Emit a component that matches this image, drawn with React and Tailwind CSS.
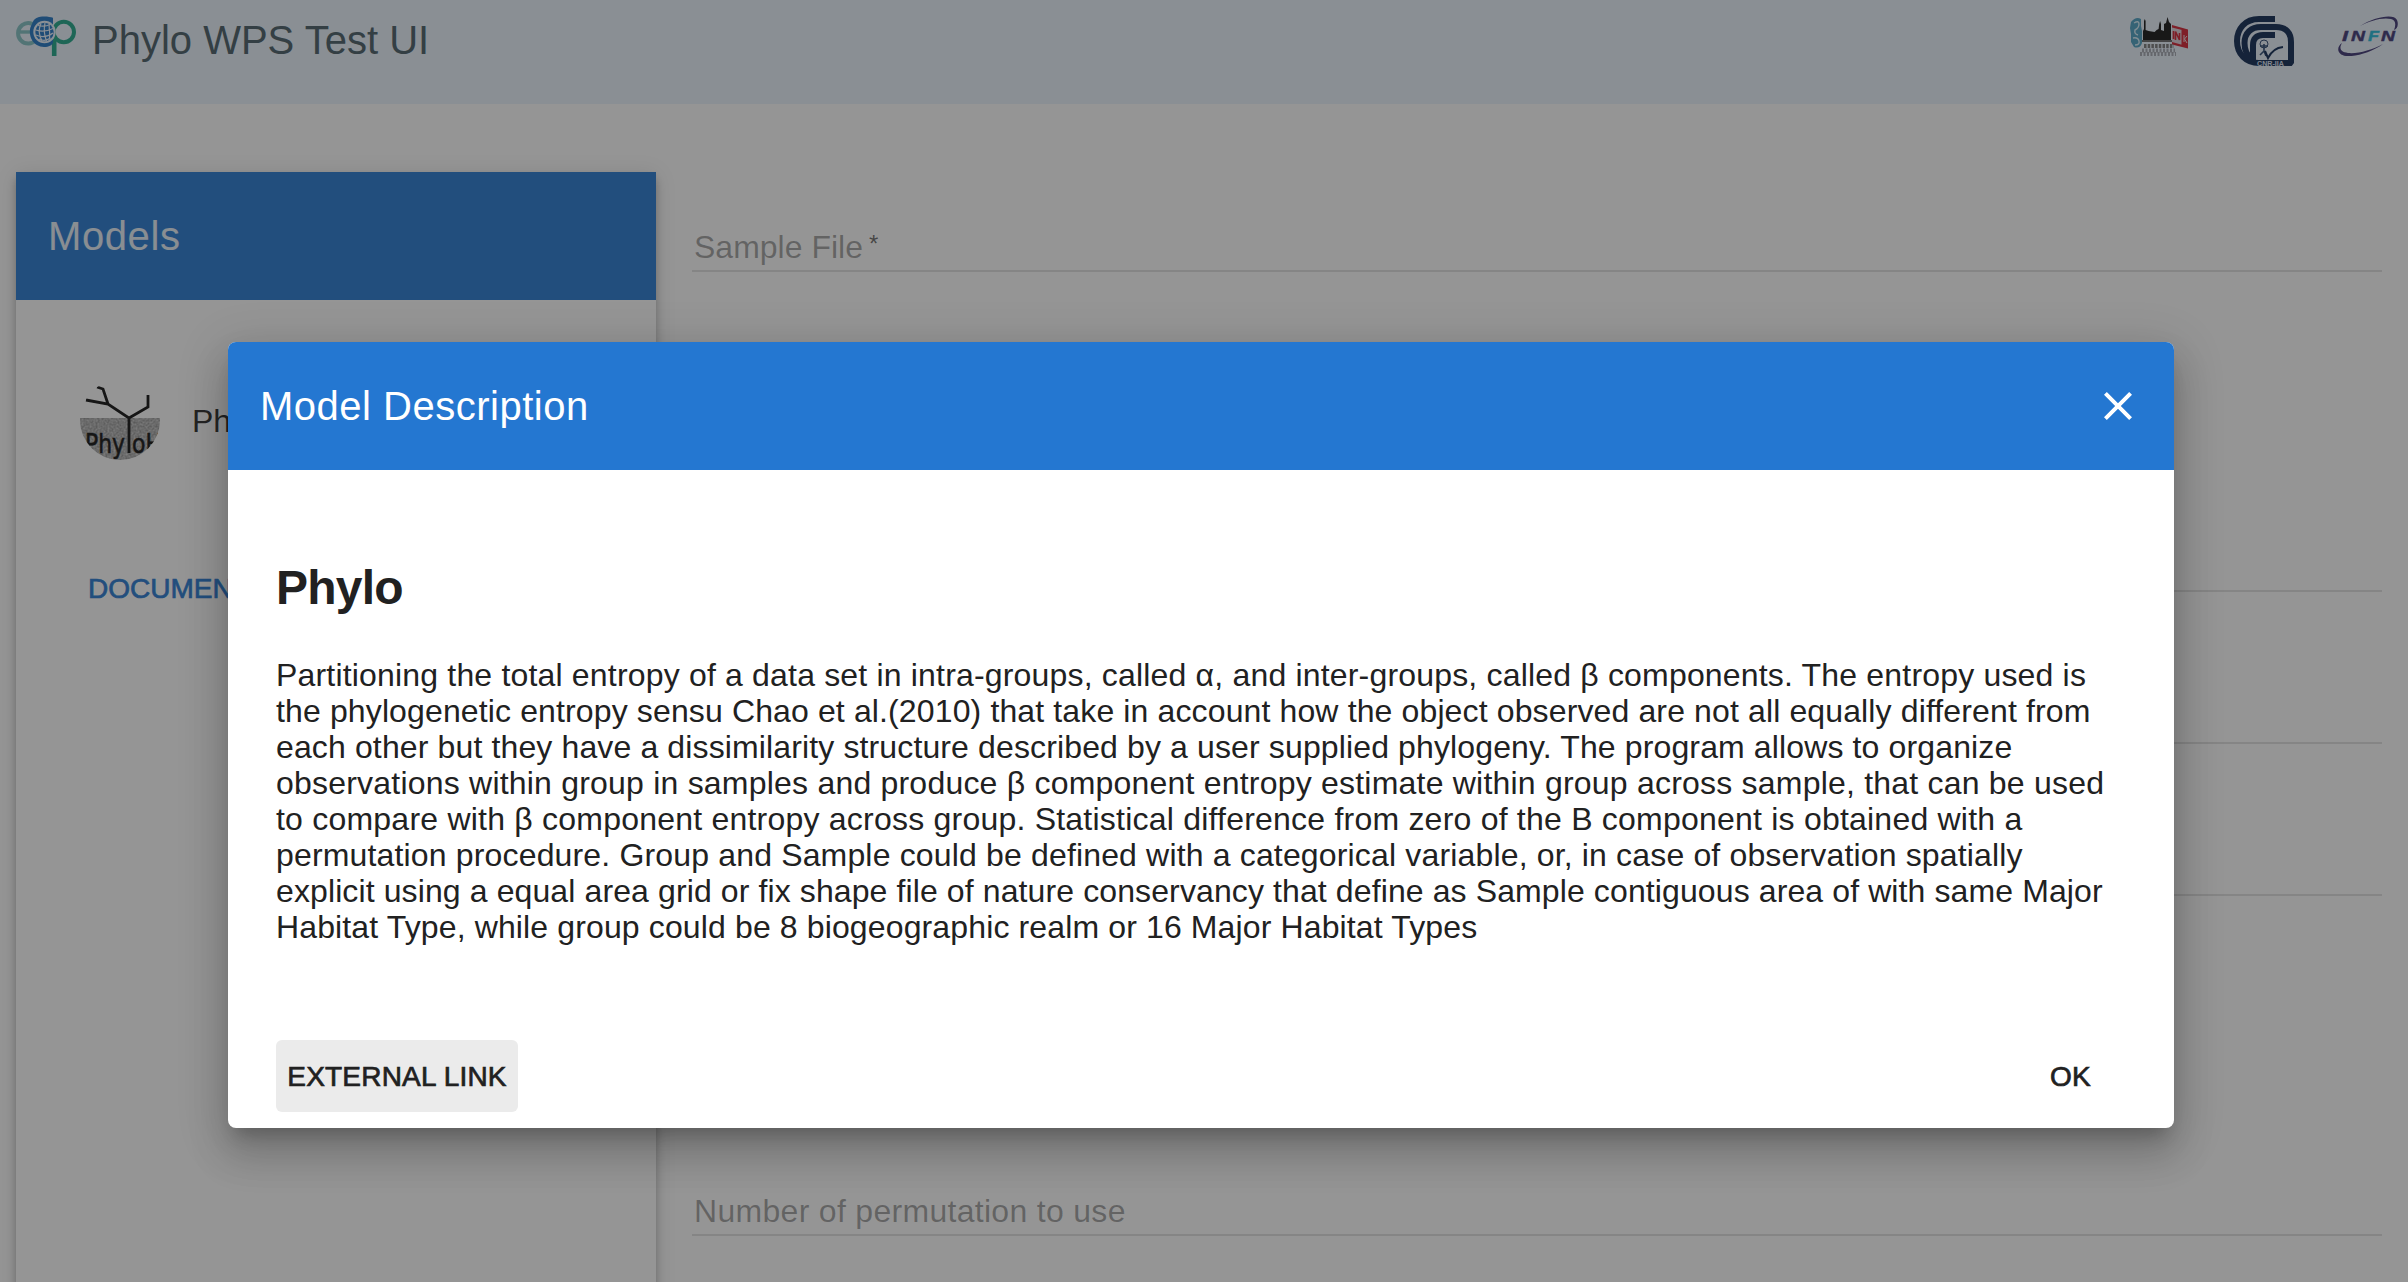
import { MdClose } from "react-icons/md";

function EgpLogo() {
  return (
    <svg width="60" height="40" viewBox="0 0 60 40" fill="none">
      <path d="M20 24a10.200 10.200 0 1 1 1-12" stroke="#7fc0c2" strokeWidth="4" />
      <path d="M4 16H15" stroke="#7fc0c2" strokeWidth="3.400" />
      <circle cx="47.800" cy="16" r="10.200" stroke="#1ba586" strokeWidth="4" />
      <path d="M38.200 20V40" stroke="#1ba586" strokeWidth="4.600" />
      <path d="M37 1.800C33 .2 25-.4 20.500 2C17 4 17 6 15.500 9C13 13 13.500 20 16 24C18 28 23 31 28 31C33 31 36 29 37 27Z" fill="#1d73c4" />
      <circle cx="28.500" cy="16" r="11.200" fill="#eaf3fe" />
      <circle cx="28.500" cy="16" r="9.200" fill="#1d73c4" />
      <g stroke="#eaf3fe" strokeWidth="1.200">
        <path d="M20 14Q28 17 37 12.500M20 19Q29 23 37 17M22 9.500Q29 11 34 8.500M23 23Q29 26 34.500 22" />
        <path d="M25 7.500Q21 16 26 25M29 7Q27 16 30.500 25M33 8.500Q34 16 33.500 23.500" />
      </g>
    </svg>
  );
}

function SkylineLogo() {
  return (
    <svg width="60" height="40" viewBox="0 0 60 40">
      <path d="M1 6Q6 0 11 3V10L12 15V27Q10 33 4 31L1 26V18L0 12Z" fill="#4a9fc2" />
      <path d="M4 7Q9 4 9 8T5 14Q4 18 8 19M3 22Q8 21 9 25T5 29" stroke="#d6effa" strokeWidth="1.400" fill="none" />
      <path d="M13 25V15l1-2V5l.8-2 .8 2v9l3 1 6 1 2-2 2-1 .6-5 .9-3 .9 3v6l3 1V8l2-1 1.500-6 1.500 5 2 2V25Z" fill="#111" />
      <path d="M12 26H42V24H12Z" fill="#666" />
      <path d="M42 10L58 14V32L42 28Z" fill="#dccfd8" />
      <path d="M42 9L58 13.500V15.500L42 11.500ZM42 26L58 30.500V32.500L42 28.500ZM51.500 13L58 14V32L51.500 30Z" fill="#d41e2e" />
      <path d="M43.500 23V15M45.500 24V15.500L49.500 24V17" stroke="#d41e2e" strokeWidth="1.600" fill="none" />
      <path d="M54 19V26M57 20L54.500 23L57 27" stroke="#eed7dc" fill="none" />
      <path d="M14 30H44" stroke="#777" strokeWidth="4" strokeDasharray="2.500 1.200" />
      <path d="M12 34.500H45M10 38H46" stroke="#a3a8b1" strokeWidth="4" strokeDasharray="2 1.500" />
    </svg>
  );
}

function CnrLogo() {
  return (
    <svg width="60" height="50" viewBox="0 0 60 50" fill="none">
      <g stroke="#0b2650" strokeWidth="6">
        <path d="M41 3H25C11 3 3 13 3 25C3 38 12 47 25 47H54" />
        <path d="M18 43C12 39 10.500 33 10.500 27C10.500 17 17 11 27 11H42C52 11 57 17 57 26V46L54 50" />
        <path d="M41 19H29C22 19 19 23 19 29V46" />
      </g>
      <path d="M23 44H52V50H26Z" fill="#0b2650" />
      <circle cx="30" cy="28" r="4" stroke="#27456e" strokeWidth="1" />
      <path d="M30 28V36M26 30L34 30M30 35L26 39M30 35L32 40" stroke="#27456e" strokeWidth="1.600" />
      <path d="M31 35L34 42Q39 32 49 31" stroke="#0b2650" strokeWidth="2" />
      <text x="23" y="49.500" textLength="27" lengthAdjust="spacingAndGlyphs" fontSize="7" fontWeight="700" fill="#dbe3f2" fontFamily="Liberation Sans, sans-serif">CNR-IIA</text>
    </svg>
  );
}

function InfnLogo() {
  return (
    <svg width="60" height="40" viewBox="0 0 60 40">
      <path d="M22 10C36 1 56 -3 59 4C61 9 59 13 56 14C58 9 58 4 53 3C44 1 32 5 22 10Z" fill="#3b3272" />
      <path d="M4 27C1 32 2 36 10 37C20 38 34 34 45 28C34 36 18 41 8 40C-1 39 -2 31 4 27Z" fill="#3b3272" />
      <g fontFamily="Liberation Sans, sans-serif" fontSize="14" fontWeight="700" fontStyle="italic" fill="#3b3272" stroke="#3b3272" strokeWidth="0.400">
        <text x="4" y="25" textLength="6" lengthAdjust="spacingAndGlyphs">I</text>
        <text x="13" y="25" textLength="14" lengthAdjust="spacingAndGlyphs">N</text>
        <text x="30" y="25" textLength="11" lengthAdjust="spacingAndGlyphs" fill="#20b8d8" stroke="#20b8d8">F</text>
        <text x="43" y="25" textLength="14" lengthAdjust="spacingAndGlyphs">N</text>
      </g>
    </svg>
  );
}

function PhyloAvatar() {
  return (
    <svg className="rounded-full" width="80" height="80" viewBox="0 0 80 80" fill="none">
      <defs>
        <filter id="grain" x="0" y="0" width="100%" height="100%" colorInterpolationFilters="sRGB">
          <feTurbulence type="fractalNoise" baseFrequency="0.5" numOctaves="2" />
          <feColorMatrix values="0.4 0 0 0 0.480 0.4 0 0 0 0.480 0.4 0 0 0 0.480 0 0 0 0 1" />
        </filter>
      </defs>
      <rect y="38" width="80" height="42" filter="url(#grain)" />
      <path d="M49 73V38L28 24L6 20M28 24L23 9L17 7M49 38L68 27V15" stroke="#0c0c0c" strokeWidth="2.800" />
      <g fontFamily="DejaVu Sans, sans-serif" fontSize="27" fill="#0c0c0c" stroke="#0c0c0c" strokeWidth="0.600">
        <text x="5" y="73" textLength="40" lengthAdjust="spacingAndGlyphs">Phy</text>
        <text x="52" y="73" textLength="30" lengthAdjust="spacingAndGlyphs">oH</text>
      </g>
    </svg>
  );
}

function Field({ label, required, className }) {
  return (
    <div className={"flex items-end border-b-2 border-black/12 " + className}>
      {label && <span className="pb-[5px] pl-[2px] text-[32px] leading-[36px] text-black/38">{label}</span>}
      {required && <span className="pb-[14px] pl-[6px] text-[24px] leading-[24px] text-black/60">*</span>}
    </div>
  );
}

const lines = [
  ["Partitioning the total entropy of a data set in intra-groups, called α, and inter-groups, called β components. The entropy used is", "tracking-[0.18px]"],
  ["the phylogenetic entropy sensu Chao et al.(2010) that take in account how the object observed are not all equally different from", "tracking-[0.13px]"],
  ["each other but they have a dissimilarity structure described by a user supplied phylogeny. The program allows to organize", "tracking-[0.13px]"],
  ["observations within group in samples and produce β component entropy estimate within group across sample, that can be used", "tracking-[0.21px]"],
  ["to compare with β component entropy across group. Statistical difference from zero of the B component is obtained with a", "tracking-[0.22px]"],
  ["permutation procedure. Group and Sample could be defined with a categorical variable, or, in case of observation spatially", "tracking-[0.16px]"],
  ["explicit using a equal area grid or fix shape file of nature conservancy that define as Sample contiguous area of with same Major", "tracking-[0.11px]"],
  ["Habitat Type, while group could be 8 biogeographic realm or 16 Major Habitat Types", "tracking-[0.13px]"],
];

function Dialog() {
  return (
    <section className="ml-[228px] mt-[342px] flex h-[786px] w-[1946px] flex-col overflow-hidden rounded-lg bg-white text-[#212121] shadow-[0_14px_16px_-8px_rgba(0,0,0,0.2),0_26px_38px_4px_rgba(0,0,0,0.14),0_10px_48px_8px_rgba(0,0,0,0.12)]">
      <header className="flex h-32 shrink-0 items-center justify-between bg-[#2477d1] px-8 text-white">
        <h2 className="text-[40px] tracking-[0.5px]">Model Description</h2>
        <MdClose size={48} />
      </header>
      <div className="grow px-12 pt-[90px]">
        <h1 className="text-[48px] font-bold leading-[56px] tracking-[-0.8px]">Phylo</h1>
        <p className="mt-[41px] whitespace-nowrap text-[32px] leading-[36px]">
          {lines.map(([text, tracking]) => (
            <span key={text} className={"block " + tracking}>{text}</span>
          ))}
        </p>
      </div>
      <footer className="flex items-center justify-between pb-4 pl-12 pr-[71px] text-[28px] [-webkit-text-stroke:0.7px_#212121]">
        <button className="h-[72px] w-[242px] rounded-md bg-[#ebebeb] pt-px tracking-[0.2px]">EXTERNAL LINK</button>
        <button className="h-[72px] px-3 pt-px tracking-[0.3px]">OK</button>
      </footer>
    </section>
  );
}

export default function App() {
  return (
    <div className="relative h-[1282px] w-[2408px] overflow-hidden bg-white font-['Liberation_Sans',sans-serif]">
      <header className="flex h-[104px] items-start bg-[#eaf3fe] pl-4 pr-[10px] pt-4">
        <EgpLogo />
        <h1 className="ml-4 text-[40px] leading-[48px] text-[#455a64]">Phylo WPS Test UI</h1>
        <div className="ml-auto flex items-start gap-[44px]">
          <SkylineLogo />
          <CnrLogo />
          <InfnLogo />
        </div>
      </header>

      <main className="flex pl-4 pr-[26px]">
        <aside className="mt-[68px] h-[1200px] w-[640px] bg-white shadow-[0_4px_8px_-2px_rgba(0,0,0,0.2),0_8px_10px_rgba(0,0,0,0.14),0_2px_20px_rgba(0,0,0,0.12)]">
          <div className="flex h-32 items-center bg-[#2477d1] pl-8 text-[40px] tracking-[0.6px] text-white/90">Models</div>
          <div className="mt-20 flex items-center gap-8 pl-16 text-[32px] text-black/87">
            <PhyloAvatar />
            <span className="pt-0.5">Phylo</span>
          </div>
          <div className="mt-[113px] pl-[72px] text-[28px] leading-[32px] text-[#2477d1] [-webkit-text-stroke:0.7px_#2477d1]">DOCUMENTATION</div>
        </aside>
        <div className="ml-9 flex grow flex-col pt-[68px]">
          <Field label="Sample File" required className="h-[100px]" />
          <Field className="h-[320px]" />
          <Field className="h-[152px]" />
          <Field className="h-[152px]" />
          <Field label="Number of permutation to use" className="h-[340px] tracking-[0.3px]" />
        </div>
      </main>

      <div className="absolute inset-0 bg-[rgba(33,33,33,0.48)]">
        <Dialog />
      </div>
    </div>
  );
}
